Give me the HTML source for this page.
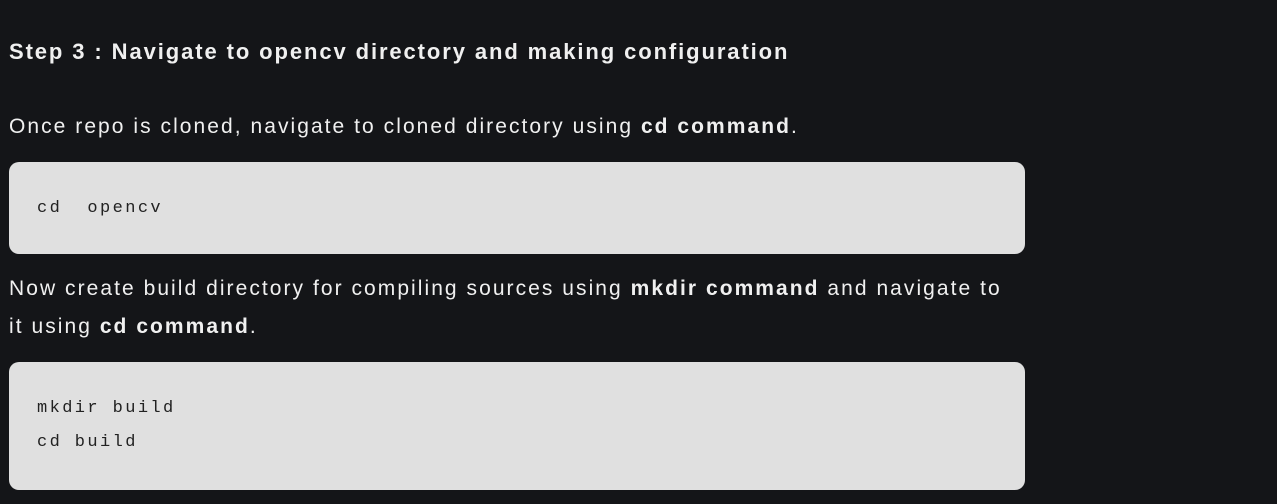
<!DOCTYPE html>
<html><head><style>
body{margin:0;background:#141518;width:1277px;height:504px;overflow:hidden;font-family:"Liberation Sans",sans-serif;color:#f0f0f0}
.h{position:absolute;left:9px;top:37px;font-size:22px;font-weight:bold;line-height:30px;letter-spacing:1.9px;margin:0;white-space:nowrap}
.p{position:absolute;left:9px;font-size:21px;line-height:38px;letter-spacing:2.05px;width:1020px;margin:0}
b{font-weight:bold}
.c{position:absolute;left:9px;width:1016px;background:#e0e0e0;border-radius:10px;color:#222;font-family:"Liberation Mono","DejaVu Sans Mono",monospace;font-size:17px;letter-spacing:2.4px;line-height:34px;box-sizing:border-box;padding-left:28px;white-space:pre}
</style></head><body>
<div class="h">Step 3 : Navigate to opencv directory and making configuration</div>
<div class="p" style="top:108px;white-space:nowrap">Once repo is cloned, navigate to cloned directory using <b>cd command</b>.</div>
<div class="c" style="top:162px;height:92px;padding-top:30px">cd  opencv</div>
<div class="p" style="top:270px;width:1012px">Now create build directory for compiling sources using <b>mkdir command</b> and navigate to<br>it using <b>cd command</b>.</div>
<div class="c" style="top:362px;height:128px;padding-top:30px">mkdir build
cd build</div>
</body></html>
